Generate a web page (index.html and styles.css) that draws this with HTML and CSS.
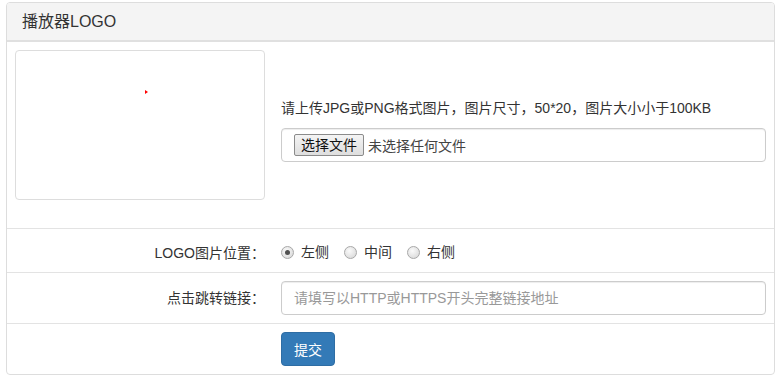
FILE: index.html
```html
<!DOCTYPE html>
<html lang="zh-CN">
<head>
    <meta charset="UTF-8">
    <meta name="viewport" content="width=device-width, initial-scale=1.0">
    <title>播放器LOGO</title>
    <link rel="stylesheet" href="styles.css">
</head>
<body>
    <div class="panel">
        <div class="panel-heading">播放器LOGO</div>
        <form class="panel-body">
            <!-- upload row -->
            <div class="form-row row-upload">
                <div class="col-label">
                    <div class="logo-preview">
                        <span class="preview-mark"></span>
                    </div>
                </div>
                <div class="col-field field-upload">
                    <p class="help-text">请上传JPG或PNG格式图片，图片尺寸，50*20，图片大小小于100KB</p>
                    <label class="file-input">
                        <span class="file-btn">选择文件</span>
                        <span class="file-name">未选择任何文件</span>
                    </label>
                </div>
            </div>

            <!-- position row -->
            <div class="form-row row-radio">
                <div class="col-label control-label">LOGO图片位置：</div>
                <div class="col-field radio-group">
                    <label class="radio-item"><span class="radio checked"></span>左侧</label>
                    <label class="radio-item"><span class="radio"></span>中间</label>
                    <label class="radio-item"><span class="radio"></span>右侧</label>
                </div>
            </div>

            <!-- link row -->
            <div class="form-row">
                <div class="col-label control-label">点击跳转链接：</div>
                <div class="col-field">
                    <input class="form-control" type="text" placeholder="请填写以HTTP或HTTPS开头完整链接地址">
                </div>
            </div>

            <div class="form-row row-last">
                <div class="col-label"></div>
                <div class="col-field">
                    <button type="button" class="btn-primary">提交</button>
                </div>
            </div>
        </form>
    </div>
</body>
</html>
```

FILE: styles.css
```css
body {
    margin: 2px 5px 0 6px;
    font-family: "Liberation Sans", "Noto Sans CJK SC", sans-serif;
    font-size: 14px;
    color: #333;
    background: #fff;
}

.panel {
    border: 1px solid #ddd;
    border-radius: 4px;
    background: #fff;
}

.panel-heading {
    background-color: #f4f4f4;
    border-bottom: 2px solid #e0e0e0;
    border-radius: 3px 3px 0 0;
    padding: 0 15px;
    height: 37px;
    line-height: 37px;
    font-size: 16px;
    color: #333;
}

.panel-body {
    margin: 0;
}

.form-row {
    display: flex;
    align-items: center;
    padding: 8px 0;
    border-bottom: 1px solid #e3e3e3;
}

.row-last {
    border-bottom: none;
}

.row-upload {
    align-items: flex-start;
    padding: 8px 0 28px;
}

.row-radio {
    padding: 10px 0 6px;
}

.col-label {
    width: 250px;
    padding: 0 8px;
    flex-shrink: 0;
}

.control-label {
    text-align: right;
    line-height: 20px;
}

.col-field {
    flex: 1;
    padding: 0 8px;
}

.logo-preview {
    box-sizing: border-box;
    height: 150px;
    border: 1px solid #ddd;
    border-radius: 4px;
    padding: 39px 0 0 129px;
}

.preview-mark {
    display: block;
    width: 0;
    height: 0;
    border-top: 2px solid transparent;
    border-bottom: 2px solid transparent;
    border-left: 3px solid #f00;
}

.field-upload {
    padding-top: 48px;
}

.help-text {
    margin: 0 0 10px;
    line-height: 20px;
    font-size: 14px;
}

.file-input,
.form-control {
    display: flex;
    align-items: center;
    box-sizing: border-box;
    width: 100%;
    height: 34px;
    padding: 0 12px;
    border: 1px solid #ccc;
    border-radius: 4px;
    box-shadow: inset 0 1px 1px rgba(0,0,0,0.075);
    font-family: inherit;
    font-size: 14px;
    color: #555;
    background: #fff;
}

.form-control::placeholder {
    color: #999;
}

.file-btn {
    box-sizing: border-box;
    height: 22px;
    line-height: 20px;
    padding: 0 6px;
    border: 1px solid #8b8b8b;
    border-radius: 2px;
    background: linear-gradient(#f4f4f4, #dedede);
    color: #111;
    margin-right: 4px;
}

.file-name {
    color: #444;
}

.radio-group {
    display: flex;
    align-items: center;
    gap: 15px;
    line-height: 27px;
}

.radio-item {
    display: flex;
    align-items: center;
    gap: 7px;
    color: #333;
}

.radio {
    position: relative;
    box-sizing: border-box;
    width: 13px;
    height: 13px;
    border: 1px solid #a8a8a8;
    border-radius: 50%;
    background: radial-gradient(circle at 40% 35%, #fafafa, #d4d4d4);
}

.radio.checked::after {
    content: "";
    position: absolute;
    left: 3px;
    top: 3px;
    width: 5px;
    height: 5px;
    border-radius: 50%;
    background: #505050;
}

.btn-primary {
    height: 34px;
    padding: 0 12px;
    border: 1px solid #2e6da4;
    border-radius: 4px;
    background-color: #337ab7;
    color: #fff;
    font-family: inherit;
    font-size: 14px;
    cursor: pointer;
}
```
